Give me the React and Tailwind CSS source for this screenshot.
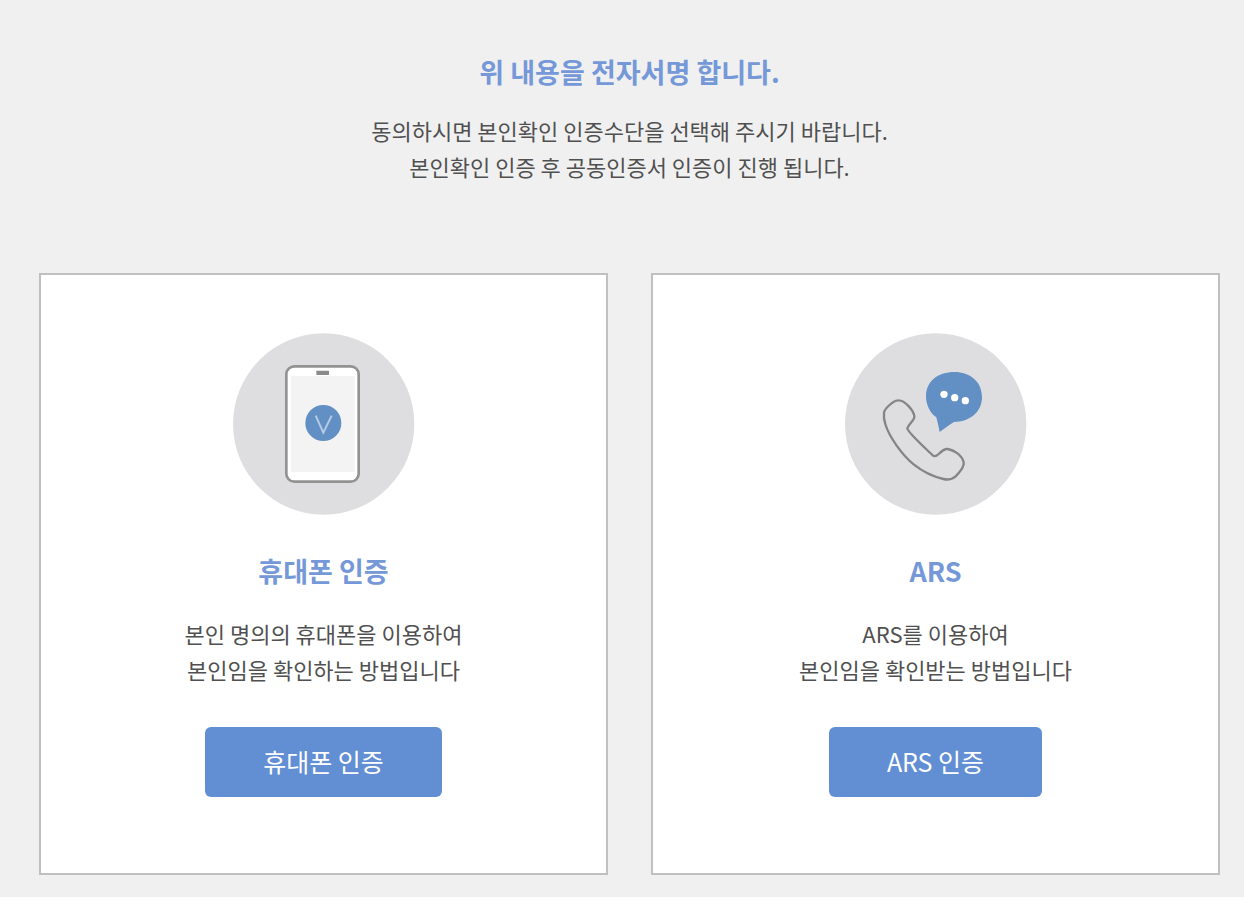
import React from 'react';

const PhoneIcon = () => (
  <svg viewBox="0 0 546 546" className="w-[182px] h-[182px]" aria-hidden="true">
    <circle cx="272" cy="273" r="272" fill="#dedee0" />
    <g transform="translate(-2 3)">
      <rect x="162" y="97" width="217" height="346" rx="24" fill="#fff" stroke="#929292" strokeWidth="8" />
      <rect x="176" y="126" width="191" height="288" fill="#f3f3f3" />
      <rect x="252" y="110" width="38" height="13" rx="2" fill="#8a8a8a" />
      <circle cx="273" cy="267" r="54" fill="#628fc4" />
      <path d="M250 245 L273 296 L298 245" fill="none" stroke="#b4cbe5" strokeWidth="6" />
    </g>
  </svg>
);

const ArsIcon = () => (
  <svg viewBox="0 0 546 546" className="w-[182px] h-[182px]" aria-hidden="true">
    <circle cx="272" cy="273" r="272" fill="#dedee0" />
    <g transform="translate(-3 1)">
      <path
        d="M120 238 C122 226 148 201 163 201 C182 200 210 232 211 250 C211 262 193 272 190 285 C192 298 250 350 266 366 C271 370 278 368 284 362 C292 354 302 346 311 347 C328 350 354 364 359 387 C361 398 352 412 335 429 C322 440 310 440 298 437 C268 430 240 418 210 394 C175 366 135 310 124 272 C119 258 119 248 120 238 Z"
        fill="none"
        stroke="#858587"
        strokeWidth="7"
        strokeLinejoin="round"
      />
      <path
        d="M246 189 C246 142 284 116 331 116 C378 116 414 144 414 192 C414 237 376 266 330 266 C318 272 302 286 287 296 C284 280 280 264 277 252 C258 240 246 214 246 189 Z"
        fill="#628fc4"
      />
      <circle cx="300" cy="183" r="11" fill="#fff" />
      <circle cx="332" cy="193" r="11" fill="#fff" />
      <circle cx="364" cy="202" r="11" fill="#fff" />
    </g>
  </svg>
);

const methods = [
  {
    id: 'phone',
    icon: <PhoneIcon />,
    title: '휴대폰 인증',
    lines: ['본인 명의의 휴대폰을 이용하여', '본인임을 확인하는 방법입니다'],
    button: '휴대폰 인증',
  },
  {
    id: 'ars',
    icon: <ArsIcon />,
    title: 'ARS',
    lines: ['ARS를 이용하여', '본인임을 확인받는 방법입니다'],
    button: 'ARS 인증',
  },
];

const MethodCard = ({ icon, title, lines, button }) => (
  <section className="flex flex-col items-center bg-white border-2 border-[#c0c0c0] pt-[58px] pb-[76px]">
    {icon}
    <h2 className="mt-9 text-[27px] leading-10 font-bold text-[#7598d8]">{title}</h2>
    <p className="mt-6 text-[22px] leading-9 text-center text-[#505050]">
      {lines[0]}
      <br />
      {lines[1]}
    </p>
    <button
      type="button"
      className="mt-10 h-[70px] px-[58px] rounded-md bg-[#628fd4] text-[25px] text-white cursor-pointer hover:bg-[#5582c8]"
    >
      {button}
    </button>
  </section>
);

const App = () => {
  return (
    <main className="bg-[#f0f0f0] pt-[52px] pb-[22px] pl-[39px] pr-6 font-['Noto_Sans_CJK_KR',sans-serif]">
      <header className="text-center">
        <h1 className="text-[27px] leading-10 font-bold text-[#7598d8]">위 내용을 전자서명 합니다.</h1>
        <p className="mt-5 text-[22px] leading-9 text-[#505050]">
          동의하시면 본인확인 인증수단을 선택해 주시기 바랍니다.
          <br />
          본인확인 인증 후 공동인증서 인증이 진행 됩니다.
        </p>
      </header>

      {/* Verification methods */}
      <div className="mt-[89px] grid grid-cols-2 gap-[43px]">
        {methods.map((method) => (
          <MethodCard key={method.id} {...method} />
        ))}
      </div>
    </main>
  );
};

export default App;
